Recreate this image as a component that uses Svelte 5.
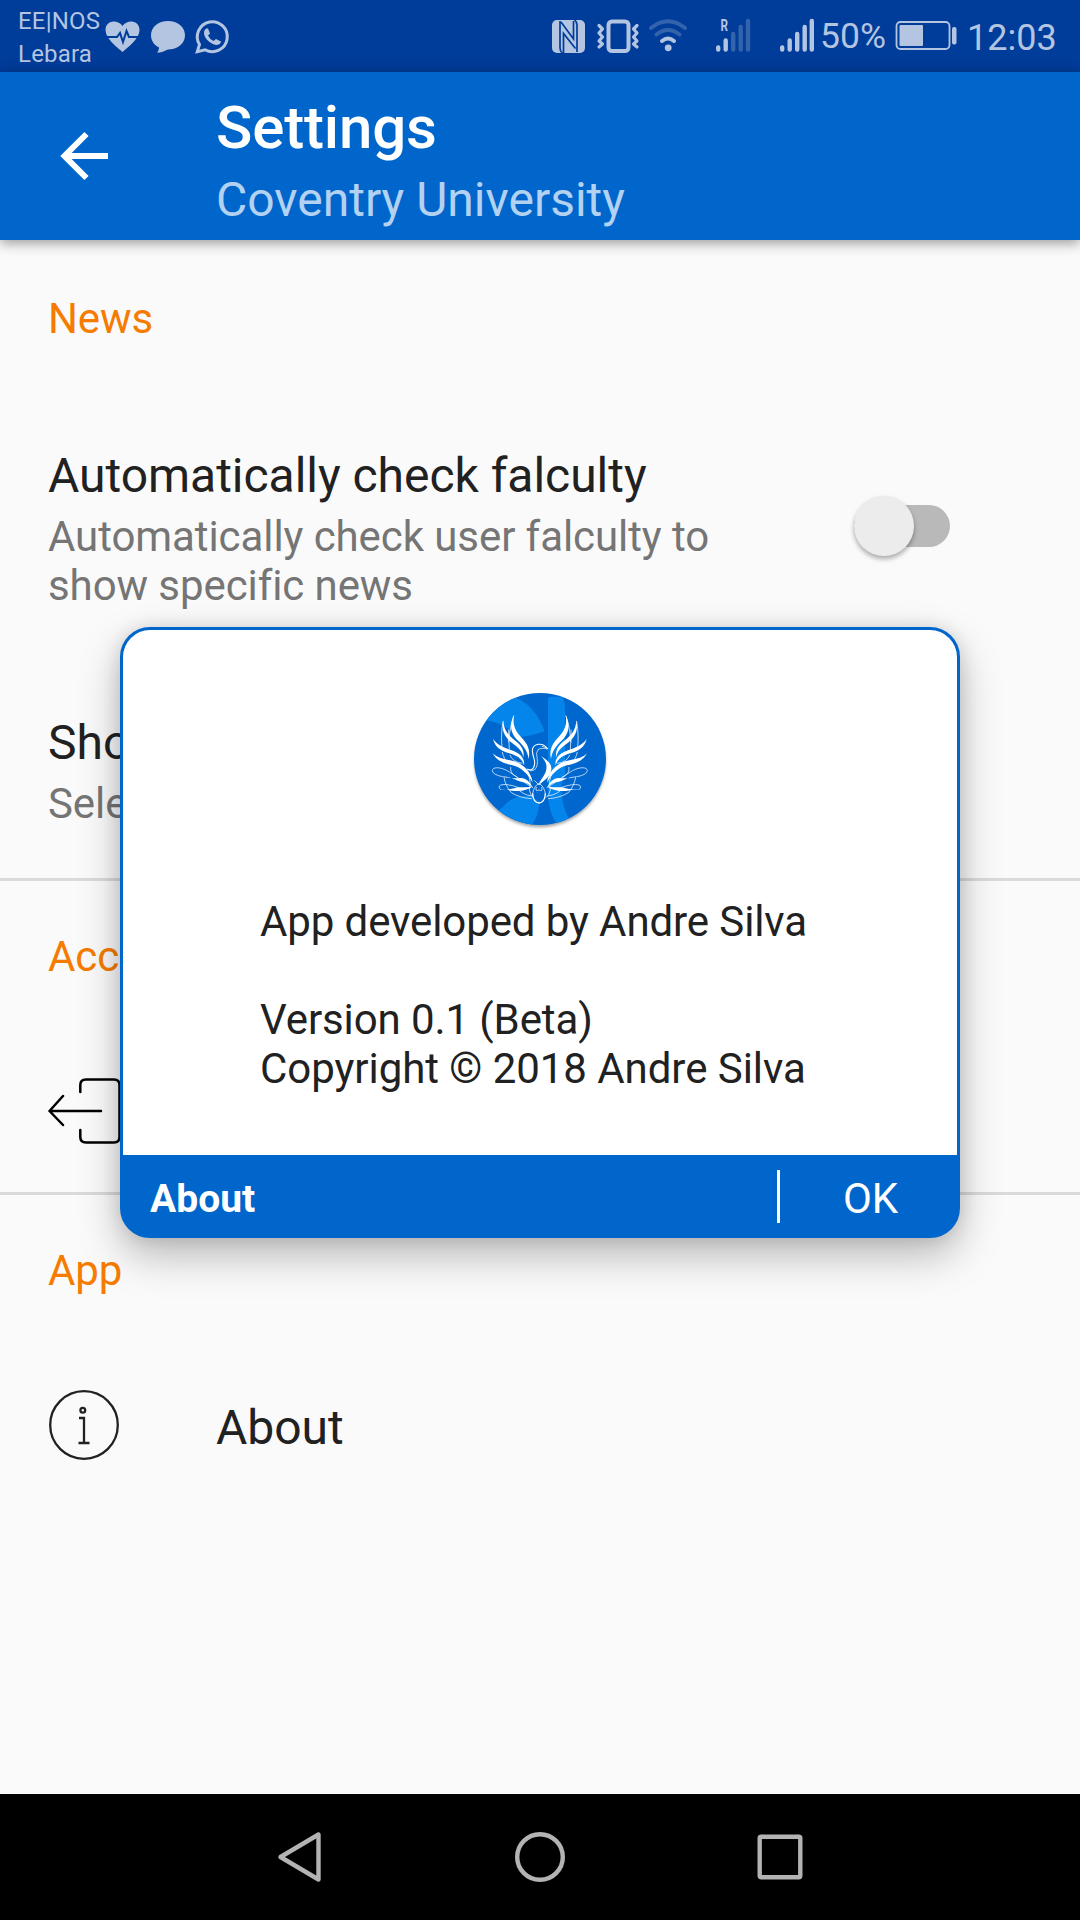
<script>
  let autoCheck = $state(false);
</script>

<div class="screen">
  <header class="status">
    <div class="carriers"><span>EE|NOS</span><span>Lebara</span></div>
    <svg class="ic notif" viewBox="104 0 128 72" width="128" height="72">
      <path fill="#b3c5e1" d="M122.500 52C117 47 105.500 39 105.500 30C105.500 25 109 21.500 113.500 21.500C117.500 21.500 120.500 23 122.500 26C124.500 23 127.500 21.500 131.500 21.500C136 21.500 139.500 25 139.500 30C139.500 39 128 47 122.500 52Z" />
      <path fill="none" stroke="#003c99" stroke-width="2" d="M105 37H117L120 33L123 42L126.500 31L129 37H140" />
      <path fill="#b3c5e1" d="M168 21C177.500 21 185 27 185 35.200C185 43.500 177.500 49.500 168 49.500C164 51.500 160 52.800 157 52.800C158.500 51 159 49 159 47.500C154 45 151 40.500 151 35.200C151 27 158.500 21 168 21Z" />
      <path fill="none" stroke="#b3c5e1" stroke-width="3" d="M197.300 51.600L199.500 44.500A15 15 0 1 1 205 49.800Z" />
      <path fill="#b3c5e1" d="M206.500 28.500Q204 29.500 204 33C204 39 212 45 217 45Q220.500 44.500 221 41.500L216 39L213.500 41Q209.500 39 208 35.500L210 33.500L208 28.500Z" />
    </svg>
    <div class="fill"></div>
    <svg class="ic" viewBox="550 0 266 72" width="266" height="72">
      <rect x="552" y="20" width="33" height="33" rx="5" fill="#b3c5e1" />
      <path fill="none" stroke="#003c99" stroke-width="1.700" d="M560 21V48Q560 51 562.500 53.500M577 52V25Q577 22 574.500 19.500M563.500 53V33.500L575.500 48.500M561 22L573.500 39V21" />
      <rect x="608.500" y="21.500" width="20" height="29.500" rx="3.500" fill="none" stroke="#b3c5e1" stroke-width="4" />
      <g fill="none" stroke="#b3c5e1" stroke-width="3.200" stroke-linecap="round" stroke-linejoin="round">
        <path d="M599 25.500L602.500 29L599 33L602.500 37L599 41L602.500 44L599 47" />
        <path d="M637 25.500L633.500 29L637 33L633.500 37L637 41L633.500 44L637 47" />
      </g>
      <g fill="none" stroke-width="4" stroke-linecap="round">
        <path stroke="#3363ad" d="M651 28Q668 14.500 685 28M656.500 34.500Q668 25.500 679.500 34.500" />
        <path stroke="#b3c5e1" d="M662 41Q668 36 674 41" />
      </g>
      <circle cx="668.200" cy="47.800" r="3.400" fill="#b3c5e1" />
      <text x="720.500" y="31" class="roam" textLength="7.500" lengthAdjust="spacingAndGlyphs">R</text>
      <g stroke-width="4.400" stroke-linecap="round">
        <path stroke="#b3c5e1" d="M718.200 47.500V49.500M725.700 40.500V49.500" />
        <path stroke="#3363ad" d="M733.200 34V49.500M740.700 27V49.500M748 21V49.500" />
        <path stroke="#b3c5e1" d="M782.200 47.500V49.500M789.700 40.500V49.500M797.200 34V49.500M804.700 27V49.500M811.800 21V49.500" />
      </g>
    </svg>
    <span class="pct">50%</span>
    <svg class="ic batt" viewBox="894 0 64 72" width="64" height="72">
      <rect x="896.500" y="22" width="53" height="27" rx="4" fill="none" stroke="#b3c5e1" stroke-width="1.800" />
      <rect x="899.500" y="25" width="23.500" height="21" rx="1" fill="#b3c5e1" />
      <rect x="952" y="27" width="4.500" height="17.500" rx="2" fill="#b3c5e1" />
    </svg>
    <span class="clock">12:03</span>
  </header>

  <div class="toolbar">
    <svg class="back" viewBox="0 0 56 64" width="56" height="64">
      <path fill="none" stroke="#fff" stroke-width="6" d="M50 32H6M28.500 10L6.500 32L28.500 54" />
    </svg>
    <div class="titles">
      <h1>Settings</h1>
      <p>Coventry University</p>
    </div>
  </div>

  <main>
    <section class="first">
      <h2>News</h2>
      <div class="row">
        <div class="text">
          <h3>Automatically check falculty</h3>
          <p>Automatically check user falculty to show specific news</p>
        </div>
        <button class="switch" class:on={autoCheck} aria-label="Automatically check falculty" onclick={() => (autoCheck = !autoCheck)}>
          <span class="thumb"></span>
        </button>
      </div>
      <div class="row second">
        <div class="text">
          <h3>Sho</h3>
          <p>Sele</p>
        </div>
      </div>
    </section>
    <section class="account">
      <h2>Acc</h2>
      <div class="row">
        <svg viewBox="48 1078 73 66" width="73" height="66">
          <path fill="none" stroke="#000" stroke-width="2.500" stroke-linecap="round" stroke-linejoin="round" d="M101 1111H49.500M63 1096L49.500 1111L63 1125M80.300 1092V1085Q80.300 1079.500 86 1079.500H114Q119.500 1079.500 119.500 1085V1137Q119.500 1142.500 114 1142.500H86Q80.300 1142.500 80.300 1137V1130" />
        </svg>
      </div>
    </section>
    <section class="app">
      <h2>App</h2>
      <div class="row">
        <svg viewBox="48 1390 72 70" width="72" height="70">
          <g fill="none" stroke="#212121" stroke-width="2.300">
            <circle cx="84" cy="1425" r="33.800" />
            <circle cx="82.800" cy="1410.300" r="2.400" />
            <path d="M79 1418H84V1443M78.500 1443H89.500" />
          </g>
        </svg>
        <h3>About</h3>
      </div>
    </section>
  </main>

  <nav>
    <svg viewBox="0 0 50 60" width="50" height="60"><path d="M43.500 7.500V52.500L5.500 30Z" /></svg>
    <svg viewBox="0 0 50 60" width="50" height="60"><circle cx="25" cy="30" r="22.800" /></svg>
    <svg viewBox="0 0 50 60" width="50" height="60"><rect x="4.700" y="9.700" width="40.600" height="40.600" rx="1.500" /></svg>
  </nav>

  <div class="dialog" role="dialog" aria-label="About">
    <div class="body">
      <svg class="logo" viewBox="0 0 480 480" width="160" height="160">
        <defs>
          <clipPath id="disc"><circle cx="240" cy="237" r="198" /></clipPath>
          <filter id="soft"><feGaussianBlur stdDeviation="4" /></filter>
          <g id="wing">
            <path fill="#fff" stroke="none" d="M162 105C147 135 152 160 172 180C192 199 203 214 206 237C212 207 201 190 183 171C165 152 157 133 162 105Z" />
            <path fill="#fff" stroke="none" d="M130 122C122 154 138 176 160 192C177 204 187 214 190 232C194 210 184 196 166 182C144 165 132 150 130 122Z" />
            <path fill="#fff" stroke="none" d="M99 177C105 204 127 214 148 220C170 226 186 236 192 256C196 234 178 219 155 211C130 202 113 196 99 177Z" />
            <path fill="#fff" stroke="none" d="M98 220C112 246 136 251 158 256C183 262 204 282 218 308C214 276 190 252 163 244C138 237 114 237 98 220Z" />
            <path fill="#fff" stroke="none" d="M127 290C150 288 168 303 186 306Q204 308 218 322Q206 296 184 294Q155 296 127 290Z" />
            <path fill="#fff" stroke="none" d="M122 329C140 326 156 335 178 333Q202 330 216 321Q194 322 174 322Q150 330 122 329Z" />
            <path d="M129 124Q121 170 127 208M161 108Q143 160 148 212M146 150V186M127 217Q132 240 146 248Q160 256 180 252M150 226Q158 246 186 250" />
            <path d="M127 290Q98 284 97 272C98 258 128 262 148 276C174 292 194 310 218 322" />
            <path d="M122 329Q112 320 122 315Q140 310 174 322" />
            <path d="M132 292Q136 318 154 338Q180 354 214 356M152 262Q148 280 172 292M204 282Q214 300 208 330Q212 348 220 352M172 324Q184 344 216 348" />
          </g>
        </defs>
        <circle cx="240" cy="245" r="197" fill="#000" opacity=".35" filter="url(#soft)" />
        <circle cx="240" cy="237" r="198" fill="#0067ce" />
        <g clip-path="url(#disc)" fill="#0485ec">
          <path d="M70 119Q110 70 150 48Q222 66 254 154Q205 170 174 172Q136 128 70 119Z" />
          <path d="M264 56Q264 50 270 50H306Q315 60 315 90V290Q300 310 306 350Q310 390 330 420L296 440Q264 400 264 340Z" />
          <path d="M112 395L132 378Q150 350 210 346L238 366Q236 410 212 440H170Z" />
        </g>
        <g fill="none" stroke="#fff" stroke-width="2.100" stroke-linecap="round">
          <use href="#wing" />
          <use href="#wing" transform="translate(479 0) scale(-1 1)" />
          <path d="M262 205Q250 190 234 193Q217 197 217 212Q218 224 222 236Q227 252 220 264Q214 273 203 268" stroke-width="3.200" />
          <path d="M262 207Q244 202 234 209Q227 218 231 232Q236 258 223 270Q212 276 203 268M262 205L246 199" />
          <path fill="#fff" stroke="none" d="M244 228C252 240 262 249 259 268C256 286 244 296 236 312C258 302 275 284 274 264C272 244 254 238 244 228Z" />
          <path d="M218 342Q220 320 237 310Q254 320 256 342M224 302L237 315L250 302M229 322Q224 336 237 330Q250 336 245 322" />
          <path d="M218 342Q220 368 237 369Q254 368 256 342" stroke-width="4" />
        </g>
      </svg>
      <div class="copy">
        <p>App developed by Andre Silva</p>
        <p class="gap">Version 0.1 (Beta)</p>
        <p class="copyright">Copyright © 2018 Andre Silva</p>
      </div>
    </div>
    <footer>
      <strong>About</strong>
      <button>OK</button>
    </footer>
  </div>
</div>

<style>
  :global(body) { margin: 0; }
  .screen {
    position: relative;
    width: 1080px;
    height: 1920px;
    display: flex;
    flex-direction: column;
    overflow: hidden;
    background: #fafafa;
    color: #212121;
    font-family: Roboto, "Liberation Sans", sans-serif;
  }
  h1, h2, h3, p { margin: 0; font-weight: 400; }
  svg { display: block; flex: none; }
  button { border: 0; padding: 0; font: inherit; color: inherit; }

  .status {
    height: 72px;
    flex: none;
    display: flex;
    box-sizing: border-box;
    padding: 0 25px 0 18px;
    background: #003c99;
    color: #b3c5e1;
  }
  .carriers {
    width: 86px;
    padding-top: 5px;
    display: flex;
    flex-direction: column;
    font-size: 24px;
    line-height: 33px;
    letter-spacing: .2px;
  }
  .fill { flex: 1; }
  .roam { font: 700 16px Roboto, sans-serif; fill: #b3c5e1; }
  .pct { width: 74px; margin-left: 4px; font-size: 35.5px; line-height: 72px; }
  .clock { width: 88px; margin-left: 9px; font-size: 36px; line-height: 76px; }

  .toolbar {
    height: 168px;
    flex: none;
    display: flex;
    background: #0066cc;
    color: #fff;
    box-shadow: 0 3px 12px rgba(0, 0, 0, .4);
    z-index: 1;
  }
  .back { margin: 52px 102px 0 58px; }
  .titles { padding-top: 20px; }
  h1 { font-size: 60px; line-height: 72px; font-weight: 500; letter-spacing: -.15px; }
  .titles p { margin-top: 8px; font-size: 48px; line-height: 56px; color: #b3d1f0; }

  main { flex: 1; }
  section { padding: 52px 48px 0; }
  section + section { border-top: 3px solid #dadada; }
  .first { padding-top: 55px; padding-bottom: 50px; }
  .account { padding-bottom: 48px; }
  h2 { font-size: 42px; line-height: 48px; letter-spacing: -.1px; color: #f57c00; }
  h3 { font-size: 48px; line-height: 58px; letter-spacing: -.03px; }
  .row { display: flex; }
  .first .row { padding-top: 104px; }
  .account .row { padding-top: 97px; }
  .app .row { padding-top: 95px; align-items: center; gap: 96px; }
  .app h3 { padding-top: 5px; }
  .text { width: 720px; }
  .text p { margin-top: 7px; font-size: 42px; line-height: 49px; letter-spacing: -.08px; color: #757575; }
  .switch {
    width: 96px;
    height: 42px;
    margin: 58px 0 0 86px;
    display: flex;
    align-items: center;
    border-radius: 21px;
    background: #b9b9b9;
  }
  .switch.on { justify-content: flex-end; }
  .thumb {
    width: 60px;
    height: 60px;
    border-radius: 50%;
    background: #ececec;
    box-shadow: 0 3px 5px rgba(0, 0, 0, .32);
  }

  nav {
    height: 126px;
    flex: none;
    display: flex;
    justify-content: center;
    align-items: center;
    gap: 190px;
    background: #000;
  }
  nav svg { fill: none; stroke: #b3b3b3; stroke-width: 4.4; stroke-linejoin: round; }

  .dialog {
    position: absolute;
    z-index: 2;
    left: 120px;
    top: 627px;
    width: 840px;
    height: 611px;
    box-sizing: border-box;
    display: flex;
    flex-direction: column;
    border: 3px solid #0066cc;
    border-radius: 30px;
    background: #0066cc;
    box-shadow: 0 18px 42px rgba(0, 0, 0, .26), 0 0 18px rgba(0, 0, 0, .12);
  }
  .body {
    flex: 1;
    display: flex;
    flex-direction: column;
    align-items: center;
    padding-top: 50px;
    border-radius: 27px 27px 0 0;
    background: #fff;
  }
  .copy { width: 560px; padding-top: 57px; font-size: 42px; line-height: 49px; letter-spacing: -.1px; }
  .copyright { letter-spacing: -.05px; }
  .gap { margin-top: 49px; }
  footer {
    height: 80px;
    display: flex;
    align-items: center;
    justify-content: space-between;
    padding-left: 27px;
    color: #fff;
  }
  footer strong { padding-top: 7px; font-size: 39px; line-height: 48px; font-weight: 700; }
  footer button {
    width: 180px;
    height: 53px;
    margin-top: 2px;
    padding: 4px 0 0 4px;
    border-left: 3px solid #fff;
    background: none;
    font-size: 42px;
    line-height: 50px;
    text-align: center;
  }
</style>
